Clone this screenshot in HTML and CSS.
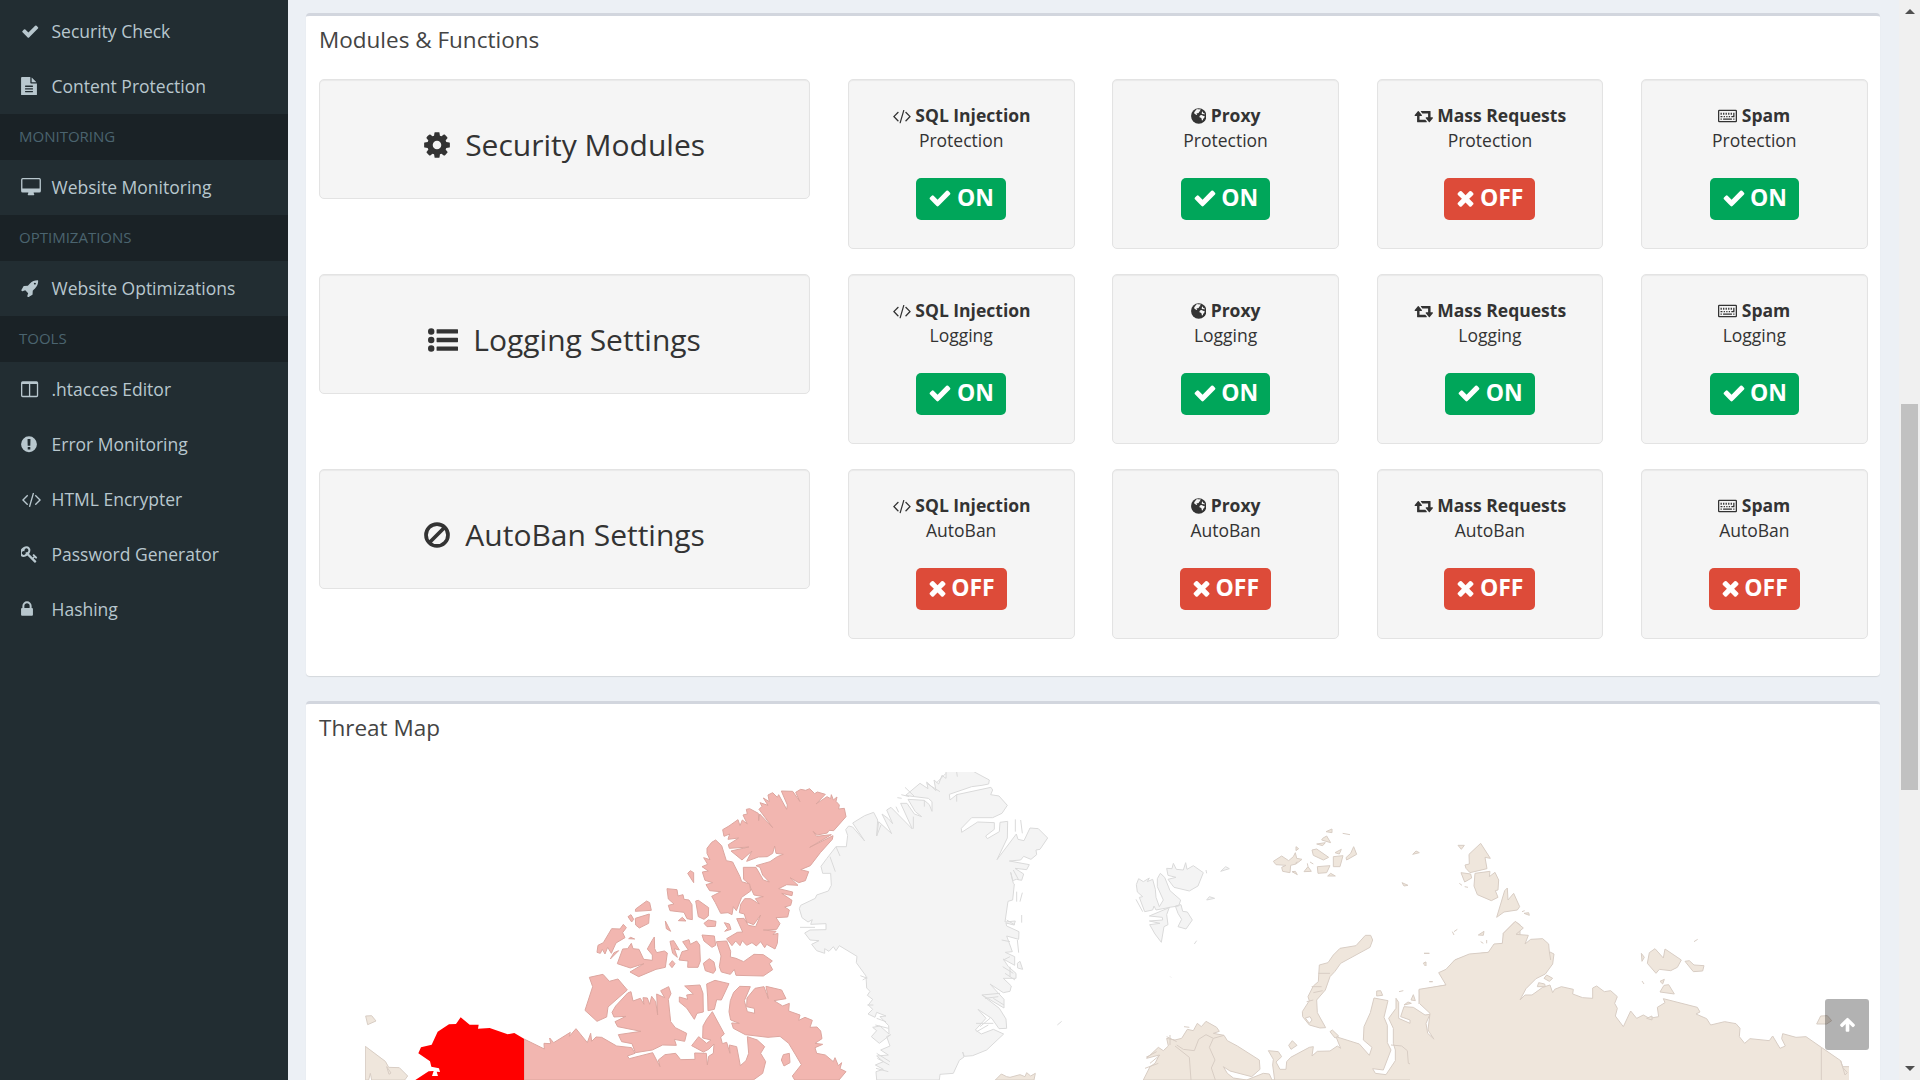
FILE: index.html
```
<!DOCTYPE html>
<html lang="en">
<head>
<meta charset="utf-8">
<title>Dashboard</title>
<link rel="stylesheet" href="styles.css">
</head>
<body>
<svg class="defs" width="0" height="0" aria-hidden="true">
<defs>
<symbol id="check" viewBox="0 0 1792 1792"><path d="M1671 566q0 40-28 68l-724 724-136 136q-28 28-68 28t-68-28l-136-136-362-362q-28-28-28-68t28-68l136-136q28-28 68-28t68 28l294 295 656-657q28-28 68-28t68 28l136 136q28 28 28 68z"/></symbol>
<symbol id="times" viewBox="190 0 1408 1792"><path d="M1490 1322q0 40-28 68l-136 136q-28 28-68 28t-68-28l-294-294-294 294q-28 28-68 28t-68-28l-136-136q-28-28-28-68t28-68l294-294-294-294q-28-28-28-68t28-68l136-136q28-28 68-28t68 28l294 294 294-294q28-28 68-28t68 28l136 136q28 28 28 68t-28 68l-294 294 294 294q28 28 28 68z"/></symbol>
<symbol id="cog" viewBox="128 0 1536 1792"><path d="M1152 896q0-106-75-181t-181-75-181 75-75 181 75 181 181 75 181-75 75-181zm512-109v222q0 12-8 23t-20 13l-185 28q-19 54-39 91 35 50 107 138 10 12 10 25t-9 23q-27 37-99 108t-94 71q-12 0-26-9l-138-108q-44 23-91 38-16 136-29 186-7 28-36 28h-222q-14 0-24.500-8.500t-11.500-21.500l-28-184q-49-16-90-37l-141 107q-10 9-25 9-14 0-25-11-126-114-165-168-7-10-7-23 0-12 8-23 15-21 51-66.500t54-70.500q-27-50-41-99l-183-27q-13-2-21-12.500t-8-23.500v-222q0-12 8-23t19-13l186-28q14-46 39-92-40-57-107-138-10-12-10-24 0-10 9-23 26-36 98.500-107.500t94.500-71.500q13 0 26 10l138 107q44-23 91-38 16-136 29-186 7-28 36-28h222q14 0 24.500 8.500t11.500 21.500l28 184q49 16 90 37l142-107q9-9 24-9 13 0 25 10 129 119 165 170 7 8 7 22 0 12-8 23-15 21-51 66.500t-54 70.500q26 50 41 98l183 28q13 2 21 12.500t8 23.500z"/></symbol>
<symbol id="list" viewBox="0 0 1792 1792"><path d="M384 1408a192 192 0 1 1-384 0a192 192 0 0 1 384 0zM384 896a192 192 0 1 1-384 0a192 192 0 0 1 384 0zM384 384a192 192 0 1 1-384 0a192 192 0 0 1 384 0zM544 1280h1216q32 0 32 32v192q0 32-32 32h-1216q-32 0-32-32v-192q0-32 32-32zM544 768h1216q32 0 32 32v192q0 32-32 32h-1216q-32 0-32-32v-192q0-32 32-32zM544 256h1216q32 0 32 32v192q0 32-32 32h-1216q-32 0-32-32v-192q0-32 32-32z"/></symbol>
<symbol id="ban" viewBox="128 0 1536 1792"><g fill="none" stroke="currentColor" stroke-width="222"><circle cx="896" cy="896" r="656"/><path d="M432 1360L1360 432"/></g></symbol>
<symbol id="code" viewBox="0 0 1952 1792"><path d="M681 1399l-50 50q-10 10-23 10t-23-10l-466-466q-10-10-10-23t10-23l466-466q10-10 23-10t23 10l50 50q10 10 10 23t-10 23l-393 393 393 393q10 10 10 23t-10 23zm591-1067l-373 1291q-4 13-15.500 19.500t-23.500 2.500l-62-17q-13-4-19.500-15.500t-2.500-24.500l373-1291q4-13 15.500-19.500t23.500-2.500l62 17q13 4 19.500 15.500t2.500 24.500zm657 651l-466 466q-10 10-23 10t-23-10l-50-50q-10-10-10-23t10-23l393-393-393-393q-10-10-10-23t10-23l50-50q10-10 23-10t23 10l466 466q10 10 10 23t-10 23z"/></symbol>
<symbol id="rocket" viewBox="0 0 1792 1792"><path d="M1440 448q0-40-28-68t-68-28-68 28-28 68 28 68 68 28 68-28 28-68zm224-288q0 249-75.500 430.500t-253.500 360.500q-81 80-195 176l-20 379q-2 16-16 26l-384 224q-7 4-16 4-12 0-23-9l-64-64q-13-14-8-32l85-276-281-281-276 85q-3 1-9 1-14 0-23-9l-64-64q-17-19-5-39l224-384q10-14 26-16l379-20q96-114 176-195 188-187 358-258t431-71q14 0 24 9.500t10 22.500z"/></symbol>
<symbol id="file" viewBox="128 0 1536 1792"><path fill-rule="evenodd" d="M1596 476q14 14 28 36h-472v-472q22 14 36 28zM1024 544q0 40 28 68t68 28h544v1056q0 40-28 68t-68 28h-1344q-40 0-68-28t-28-68v-1600q0-40 28-68t68-28h800v544zM1280 1440v-64q0-32-32-32h-704q-32 0-32 32v64q0 32 32 32h704q32 0 32-32zM1280 1184v-64q0-32-32-32h-704q-32 0-32 32v64q0 32 32 32h704q32 0 32-32zM1280 928v-64q0-32-32-32h-704q-32 0-32 32v64q0 32 32 32h704q32 0 32-32z"/></symbol>
<symbol id="desktop" viewBox="0 0 1920 1792"><path fill-rule="evenodd" d="M1792 992v-832q0-32-32-32h-1600q-32 0-32 32v832q0 32 32 32h1600q32 0 32-32zM1920 160v1088q0 160-160 160h-544q0 100 64 192q0 64-64 64h-512q-64 0-64-64q64-92 64-192h-544q-160 0-160-160v-1088q0-160 160-160h1600q160 0 160 160z"/></symbol>
<symbol id="columns" viewBox="0 0 1792 1792"><path fill-rule="evenodd" d="M160 1536h608v-1152h-640v1120q0 32 32 32zM1536 1504v-1120h-640v1152h608q32 0 32-32zM1664 288v1216q0 160-160 160h-1344q-160 0-160-160v-1216q0-160 160-160h1344q160 0 160 160z"/></symbol>
<symbol id="exclaim" viewBox="128 0 1536 1792"><path fill-rule="evenodd" d="M896 128a768 768 0 1 1 0 1536a768 768 0 0 1 0-1536zM1024 1375v-190q0-32-30-32h-192q-32 0-32 32v190q0 33 32 33h192q30 0 30-33zM1022 1031l18-621q0-26-32-26h-220q-36 0-36 26l17 621q0 22 33 22h185q33 0 35-22z"/></symbol>
<symbol id="key" viewBox="128 0 1664 1792"><path d="M832 512q0-80-56-136t-136-56-136 56-56 136q0 42 19 83-41-19-83-19-80 0-136 56t-56 136 56 136 136 56 136-56 56-136q0-42-19-83 41 19 83 19 80 0 136-56t56-136zm851 704q0 17-49 66t-66 49q-9 0-28.500-16t-36.500-33-38.500-40-24.500-26l-96 96 220 220q28 28 28 68 0 42-39 81t-81 39q-40 0-68-28l-671-671q-176 131-365 131-163 0-265.500-102.500t-102.500-265.500q0-160 95-313t248-248 313-95q163 0 265.500 102.500t102.500 265.500q0 189-131 365l355 355 96-96q-3-3-26-24.500t-40-38.500-33-36.500-16-28.500q0-17 49-66t66-49q13 0 23 10 6 6 46 44.500t82 79.500 86.500 86 73 78 28.500 41z"/></symbol>
<symbol id="lock" viewBox="0 0 1152 1792"><path fill-rule="evenodd" d="M320 768h512v-192q0-106-75-181t-181-75-181 75-75 181v192zM1152 864v576q0 96-96 96h-960q-96 0-96-96v-576q0-96 96-96h32v-192q0-184 132-316t316-132 316 132 132 316v192h32q96 0 96 96z"/></symbol>
<symbol id="retweet" viewBox="0 0 1984 1792"><path d="M1344 1504q0 13-9.500 22.500t-22.500 9.500h-960q-8 0-13.500-2t-9-7-5.500-8-3-11.500-1-11.500v-600h-192q-26 0-45-19t-19-45q0-24 15-41l320-384q19-22 49-22t49 22l320 384q15 17 15 41 0 26-19 45t-45 19h-192v384h576q16 0 25 11l160 192q7 10 7 21zm640-416q0 24-15 41l-320 384q-20 23-49 23t-49-23l-320-384q-15-17-15-41 0-26 19-45t45-19h192v-384h-576q-16 0-25-12l-160-192q-7-9-7-20 0-13 9.500-22.500t22.500-9.500h960q8 0 13.500 2t9 7 5.500 8 3 11.500 1 11.500v600h192q26 0 45 19t19 45z"/></symbol>
<symbol id="globe" viewBox="128 0 1536 1792"><circle cx="896" cy="896" r="768"/><path fill="#f5f5f5" d="M640 250l190-40 60 50 130-40 90 60-90 60 40 80-110 20-30 110-90 60-110 10-60 80 80 30-20 70-110-20-90-110-90-20 30-150 90-110zM1240 440l110 60-40 90 130 10 60 120-90 20-70-70-100 40-60-90zM1000 860l120-60 140 20 60 80 110-20 60 60-60 160-90 70-40 150-90 20-30-170-60-90-120-30-40-90z"/></symbol>
<symbol id="keyboard" viewBox="0 0 1920 1792"><path fill-rule="evenodd" d="M128 256h1664q128 0 128 128v1024q0 128-128 128h-1664q-128 0-128-128v-1024q0-128 128-128zM128 384v1024h1664v-1024z"/><path d="M256 1152h128v128h-128zM512 1152h896v128h-896zM1536 1152h128v128h-128zM256 896h192v128h-192zM576 896h128v128h-128zM832 896h128v128h-128zM1088 896h128v128h-128zM1344 896h320v128h-320zM256 576h128v192h-128zM512 576h128v192h-128zM768 576h128v192h-128zM1024 576h128v192h-128zM1280 576h128v192h-128zM1536 576h128v448h-128z"/></symbol>
<symbol id="up" viewBox="0 0 1792 1792"><path d="M1675 971q0 51-37 90l-75 75q-38 38-91 38-54 0-90-38l-294-293v704q0 52-37.500 84.500t-90.500 32.500h-128q-53 0-90.500-32.500t-37.500-84.500v-704l-294 293q-36 38-90 38t-90-38l-75-75q-38-38-38-90 0-53 38-91l651-651q35-37 90-37 54 0 91 37l651 651q37 39 37 91z"/></symbol>
</defs>
</svg>
<div class="page">
<aside class="sidebar">
<a class="item"><svg class="w18"><use href="#check"/></svg>Security Check</a>
<a class="item"><svg class="w15"><use href="#file"/></svg>Content Protection</a>
<div class="header">MONITORING</div>
<a class="item"><svg class="w20"><use href="#desktop"/></svg>Website Monitoring</a>
<div class="header">OPTIMIZATIONS</div>
<a class="item"><svg class="w18"><use href="#rocket"/></svg>Website Optimizations</a>
<div class="header">TOOLS</div>
<a class="item"><svg class="w18"><use href="#columns"/></svg>.htacces Editor</a>
<a class="item"><svg class="w15"><use href="#exclaim"/></svg>Error Monitoring</a>
<a class="item"><svg class="w20"><use href="#code"/></svg>HTML Encrypter</a>
<a class="item"><svg class="w17"><use href="#key"/></svg>Password Generator</a>
<a class="item"><svg class="w12"><use href="#lock"/></svg>Hashing</a>
</aside>
<main class="content">
<section class="box modules">
<h3 class="title">Modules &amp; Functions</h3>
<div class="grid">
<div class="well wide"><svg class="b26"><use href="#cog"/></svg>Security Modules</div>
<div class="well"><div class="name"><svg class="n19"><use href="#code"/></svg><b>SQL Injection</b></div><div class="kind">Protection</div><span class="label on"><svg><use href="#check"/></svg>ON</span></div>
<div class="well"><div class="name"><svg class="n15"><use href="#globe"/></svg><b>Proxy</b></div><div class="kind">Protection</div><span class="label on"><svg><use href="#check"/></svg>ON</span></div>
<div class="well"><div class="name"><svg class="n19"><use href="#retweet"/></svg><b>Mass Requests</b></div><div class="kind">Protection</div><span class="label off"><svg><use href="#times"/></svg>OFF</span></div>
<div class="well"><div class="name"><svg class="n19"><use href="#keyboard"/></svg><b>Spam</b></div><div class="kind">Protection</div><span class="label on"><svg><use href="#check"/></svg>ON</span></div>
<div class="well wide"><svg class="b30"><use href="#list"/></svg>Logging Settings</div>
<div class="well"><div class="name"><svg class="n19"><use href="#code"/></svg><b>SQL Injection</b></div><div class="kind">Logging</div><span class="label on"><svg><use href="#check"/></svg>ON</span></div>
<div class="well"><div class="name"><svg class="n15"><use href="#globe"/></svg><b>Proxy</b></div><div class="kind">Logging</div><span class="label on"><svg><use href="#check"/></svg>ON</span></div>
<div class="well"><div class="name"><svg class="n19"><use href="#retweet"/></svg><b>Mass Requests</b></div><div class="kind">Logging</div><span class="label on"><svg><use href="#check"/></svg>ON</span></div>
<div class="well"><div class="name"><svg class="n19"><use href="#keyboard"/></svg><b>Spam</b></div><div class="kind">Logging</div><span class="label on"><svg><use href="#check"/></svg>ON</span></div>
<div class="well wide"><svg class="b26"><use href="#ban"/></svg>AutoBan Settings</div>
<div class="well"><div class="name"><svg class="n19"><use href="#code"/></svg><b>SQL Injection</b></div><div class="kind">AutoBan</div><span class="label off"><svg><use href="#times"/></svg>OFF</span></div>
<div class="well"><div class="name"><svg class="n15"><use href="#globe"/></svg><b>Proxy</b></div><div class="kind">AutoBan</div><span class="label off"><svg><use href="#times"/></svg>OFF</span></div>
<div class="well"><div class="name"><svg class="n19"><use href="#retweet"/></svg><b>Mass Requests</b></div><div class="kind">AutoBan</div><span class="label off"><svg><use href="#times"/></svg>OFF</span></div>
<div class="well"><div class="name"><svg class="n19"><use href="#keyboard"/></svg><b>Spam</b></div><div class="kind">AutoBan</div><span class="label off"><svg><use href="#times"/></svg>OFF</span></div>
</div>
</section>
<section class="box threat">
<h3 class="title">Threat Map</h3>
<svg class="map" viewBox="365 772 1484 308">
<!-- Canada and Alaska -->
<g transform="translate(340 760) scale(.33333)">
<g class="ca">
<path d="M1324 93L1358 94 1380 125 1367 97 1382 88 1397 91 1409 86 1424 101 1432 96 1456 103 1428 132 1461 110 1472 116 1474 104 1480 120 1491 111 1488 124 1498 135 1496 147 1513 145 1518 170 1481 212 1467 211 1462 219 1432 225 1419 214 1430 229 1474 224 1409 262 1479 227 1477 238 1441 278 1411 317 1382 329 1406 335 1396 362 1376 368 1350 353 1374 376 1340 374 1316 386 1358 396 1356 407 1325 400 1356 421 1352 436 1334 441 1348 450 1343 471 1308 473 1320 491 1310 508 1270 510 1308 514 1299 524 1314 520 1312 550 1305 567 1280 553 1274 563 1262 545 1249 558 1236 548 1220 556 1207 542 1200 557 1187 543 1176 557 1160 536 1192 517 1208 516 1190 476 1212 475 1225 496 1247 500 1262 465 1241 494 1220 486 1213 462 1198 458 1202 433 1214 416 1232 416 1258 432 1246 416 1270 410 1242 405 1226 370 1211 358 1210 322 1248 322 1270 360 1288 366 1268 345 1260 322 1248 317 1290 305 1312 290 1330 283 1308 280 1304 258 1298 280 1282 290 1255 291 1220 304 1236 273 1206 300 1173 273 1227 261 1168 265 1165 254 1196 234 1164 238 1169 222 1152 229 1148 209 1167 198 1194 179 1200 197 1207 180 1222 192 1209 165 1222 162 1219 148 1229 146 1255 160 1256 182 1259 162 1298 203 1257 148 1266 139 1260 128 1284 136 1270 114 1288 125 1284 105 1298 98 1312 112 1316 104 1340 148 1342 135z"/>
<path d="M1115 247L1127 240 1145 257 1159 302 1178 306 1200 350 1205 365 1229 372 1232 393 1205 412 1189 452 1180 440 1176 464 1164 458 1142 460 1126 428 1115 409 1142 395 1109 392 1098 374 1118 368 1095 361 1087 336 1105 333 1086 320 1103 313 1091 293 1110 299 1101 280 1101 265z"/>
<path d="M981 386L1011 389 1014 408 1029 404 1032 418 1047 420 1056 434 1057 479 1041 476 1032 457 990 452 985 436 1002 432 985 417zM1067 423L1075 421 1106 443 1105 468 1092 478 1075 470zM1043 340L1051 332 1061 338 1061 368zM887 447L920 423 929 428 934 451 886 454zM864 470L873 464 881 478 875 486zM886 475L928 462 926 490 898 504 887 495zM976 483L992 514 979 506zM1092 490L1105 480 1128 484 1126 499 1101 500zM1015 482L1027 472 1038 483zM1153 488L1168 492 1173 508 1154 514 1163 505zM866 536L872 532 884 537z"/>
<path d="M771 577L774 556 790 548 815 506 840 507 850 493 859 503 848 518 855 533 828 549 814 580 803 562 795 582 787 568 781 580zM836 572L811 597 822 578zM848 567L863 566 874 550 879 566 897 568 911 598 937 601 937 585 922 567 936 542 943 531 944 566 950 578 973 573 982 579 976 622 948 628 896 650 870 636 912 611 871 624 832 611zM990 544L1001 542 1018 570 1003 566 1012 592 998 580zM988 613L997 602 1005 611 996 623zM1028 545L1047 539 1051 553 1070 543 1079 555 1081 603 1074 622 1043 622 1044 603 1017 600 1026 575 1045 570zM1086 525L1123 528 1127 556 1116 562 1092 543zM1090 610L1108 596 1122 606 1127 630 1120 640 1096 632z"/>
<path d="M1129 545L1160 543 1172 574 1171 591 1188 595 1211 605 1242 583 1270 584 1297 603 1288 611 1298 629 1270 648 1188 646 1183 628 1171 643 1144 636 1138 620 1143 588z"/>
<path d="M748 652L789 643 808 664 834 657 862 690 804 741 800 771 771 784 735 751 758 680z"/>
<path d="M863 699L873 695 879 723 901 715 912 733 909 713 922 714 929 733 935 709 947 725 953 765 950 702 974 713 962 692 986 680 993 701 985 718 992 785 1006 803 1040 820 1034 844 1003 838 1009 856 968 855 937 870 886 878 876 851 845 845 835 824 903 814 833 800 825 785 858 769 822 771 816 757 827 738zM1034 678L1080 675 1089 700 1090 756 1071 760 1063 778 1040 744 1018 726 1018 711 1043 718 1040 705 1060 702zM1100 672L1125 661 1167 671 1144 720 1130 719 1123 748 1104 752 1103 711z"/>
<path d="M1181 697L1199 679 1231 680 1213 722 1222 755 1244 760 1243 745 1220 740 1221 714 1245 685 1272 680 1285 716 1278 679 1325 690 1338 716 1302 722 1328 738 1348 730 1346 753 1380 765 1376 781 1395 772 1417 781 1410 802 1431 801 1442 813 1446 836 1425 850 1448 853 1425 863 1430 880 1456 885 1480 905 1485 893 1495 917 1505 908 1500 926 1518 935 1497 960 1364 960 1357 948 1384 914 1367 885 1346 850 1320 829 1284 832 1216 824 1180 805 1175 789 1198 790 1172 780 1167 755 1171 722z"/>
<path d="M552 837L613 867 612 850 632 851 629 834 641 848 691 817 688 829 708 806 742 848 752 820 755 844 768 831 785 832 830 858 875 863 885 880 862 888 868 896 938 878 960 920 955 900 975 884 1007 880 1022 899 1065 898 1064 879 1099 880 1102 915 1106 889 1120 880 1122 852 1106 868 1090 876 1055 857 1076 830 1100 850 1113 840 1088 834 1089 798 1100 778 1117 755 1153 822 1142 831 1147 851 1160 847 1170 880 1168 855 1190 860 1201 917 1218 902 1226 880 1222 830 1252 840 1274 860 1262 880 1277 905 1268 940 1240 960 552 960zM1324 900L1330 884 1348 880 1350 908 1332 918z"/>
</g>
<path class="us" d="M226 960L266 934 281 933 276 948 294 948 290 935 300 936 297 925 274 920 270 904 235 880 243 862 275 854 293 815 327 793 348 792 362 772 389 794 416 794 414 806 449 804 503 823 523 819 552 836V960z"/>
<path class="ru" d="M77 768L95 767 108 783 83 794zM76 859L136 904 146 922 178 923 203 948 194 960H95L91 940 86 960H76zM140 920L153 939 147 943z"/>
</g>
<!-- Greenland -->
<g class="gl" transform="translate(780 760) scale(.33333)">
<path d="M498 30L572 30 628 60 626 72 606 76 575 80 508 103 510 120 530 104 633 82 638 90 632 104 657 108 682 136 666 160 638 173 575 173 544 205 545 217 593 186 643 188 643 208 617 228 622 236 658 215 660 187 683 184 682 234 651 299 709 222 714 238 732 242 750 204 775 206 803 234 780 268 768 270 770 284 753 298 731 289 722 300 688 303 748 314 740 329 705 325 731 342 725 361 709 358 698 362 692 337 700 370 703 372 698 420 684 424 675 486 706 483 702 495 678 489 680 498 717 515 716 538 680 528 697 575 676 577 704 590 704 616 670 597 685 620 708 640 708 655 670 655 694 678 690 694 670 698 630 672 672 718 672 744 606 705 658 745 678 777 680 805 657 806 636 776 594 748 618 775 586 810 604 822 640 808 671 822 620 870 578 887 553 889 548 876 552 891 538 901 520 940 480 943 478 960H290L288 935 310 928 286 915 310 905 290 888 325 885 302 870 330 858 320 830 332 824 298 850 274 830 290 812 278 802 300 798 327 822 326 797 300 770 318 768 290 757 285 772 264 762 278 748 265 735 278 718 262 706 270 694 260 684 258 648 229 608 231 589 178 557 168 572 160 560 147 574 134 566 134 580 110 572 95 553 117 542 90 540 74 519 90 510 138 509 138 491 92 493 97 479 84 486 66 473 58 446 62 436 106 415 110 405 145 393 154 376 152 340 128 340 123 319 140 296 168 260 199 260 203 226 197 209 206 198 218 201 254 243 218 189 254 167 281 157 293 180 290 228 296 185 335 221 306 162 325 176 338 191 320 150 333 142 397 207 362 130 381 130 403 162 425 170 406 155 384 118 433 121 448 134 456 154 456 125 445 115 396 109 377 106 420 70 444 86 440 66 468 92 462 60 476 72 486 46 498 55z"/>
<path d="M400 206V170M433 121V140M290 228L303 195M530 104V125M530 36L532 50M498 40L470 68M440 70L480 95M375 82L402 108M364 104L388 110M352 113L365 115M348 140L356 157M706 178V215M722 180L727 220M60 502H105M168 260L180 288M150 290L166 335M710 395V425M727 398L720 425M725 465V488M712 540L716 578M712 610L720 604 728 628 713 624zM832 795L845 784M241 647L262 655M248 660L262 652M262 735H280M290 775L318 785M286 795L325 805M290 880L330 905M292 895L328 915M288 925L325 935M670 600L690 590M668 620L700 640M675 640L705 660M690 620L690 650M605 705L660 700M615 715L655 710M640 715L672 735M588 790L640 790M600 800L630 775M590 815L625 795M665 540L690 545M680 480L705 495M700 330L716 360"/>
</g>
<!-- Svalbard -->
<g class="gl" transform="translate(1100 800) scale(.33333)">
<path d="M109 254L116 236 130 245 148 234 142 245 158 238 166 268 168 292 178 320 190 300 172 260 172 236 181 220 194 232 210 272 242 300 236 318 208 322 200 344 204 374 192 380 184 427 165 402 149 374 180 370 148 363 188 360 187 352 148 348 210 322 168 330 162 318 158 330 134 335 118 292 128 290 112 276zM200 205L216 206 220 190 229 208 250 210 257 188 261 208 280 197 310 218 294 258 268 273 222 262 204 238 228 232 204 226zM226 318L243 314 248 334 262 336 277 360 258 387 234 380 245 358 234 340zM362 214L377 200 388 206zM320 300L328 290 344 295zM108 298L128 335M283 432L290 422M211 530L213 532M318 210L320 220"/>
</g>
<!-- Northern Europe and Russia -->
<g class="ru" transform="translate(1100 800) scale(.33333)">
<path d="M130 840L150 800 165 790 178 765 140 775 175 742 190 752 205 738 200 715 225 720 245 715 262 688 280 692 292 670 304 680 318 664 350 682 358 694 340 700 372 706 382 722 412 738 478 780 480 808 455 830 390 813 370 800 382 820 400 834 440 840zM440 840L490 820 508 822 516 840 524 840 518 795 520 778 505 752 535 755 545 770 528 786 540 808 558 808 560 785 572 772 628 742 640 740 636 768 652 754 690 753 712 738 722 745 708 710 778 732 808 766 816 742 790 720 792 680 811 638 822 594 864 602 852 652 862 676V728L873 750 850 810 818 806 826 820 858 824 886 782V750L880 730 880 685 866 655 888 625 888 595 896 607 896 655 930 670 930 660 902 650 912 620 940 622 975 645 990 643 978 670 983 700 1003 718 990 690 993 640 975 618 960 612 958 570 1038 555 1040 545 1018 520 1045 508 1065 480 1108 465 1165 457 1210 427V400L1245 365 1260 374V840z"/>
<path class="nofill" d="M225 738L268 772 273 840M230 735L250 748 283 752 296 718 318 704 340 715 328 742 345 780 334 804 346 840M372 706L340 715M873 735L905 738 922 752 925 790 950 798"/>
<path d="M607 635L628 602 624 590 640 558 655 545 658 495 684 488 700 465 720 445 768 437 796 406 812 406 818 420 810 442 722 490 705 514 690 530 676 570 650 600 652 638 677 683 660 684 628 675 608 650z"/>
<path fill="#fff" d="M616 654L630 650 636 660 628 670z"/>
<path d="M566 736L577 722 591 736 573 748zM690 695L697 690 716 708 705 714zM830 573L842 572 848 586 830 588zM520 184L545 168 566 182 580 170 586 158 590 175 606 178 588 192 572 196 570 218 548 214 545 202 558 196 528 194zM636 150L650 147 686 172 670 180 640 166zM700 170L729 167 720 200 700 200zM738 173L752 160 761 140 770 163 740 180zM652 200L690 197 680 218 654 220zM678 95L696 87 696 98zM668 115L680 108 692 128 665 120zM650 132L676 128 668 137zM705 158L724 148 718 162zM612 215L624 200 634 214zM576 215L592 224 586 214zM683 228L692 220 706 228zM588 140L596 146 588 152zM728 100L750 104M938 163L948 153 958 158zM906 248L924 256 912 258zM970 490L976 486 976 498zM972 460L988 460M988 545H998M933 600L940 584 946 602zM912 615L924 606 934 610zM1057 395L1062 405M1062 395L1072 388M897 575L910 572M252 680L268 682M138 772L170 755M150 790L180 765M135 805L175 790M200 710L230 725M210 705L210 735M620 605L640 600M635 560L665 560M655 520L690 520M640 578L668 572M586 190L592 185M622 190L624 200M630 186L640 192"/>
</g>
<g class="ru" transform="translate(1420 800) scale(.33333)">
<path class="land" d="M-3 568L78 555 56 518 78 508 104 480 148 462 205 457 222 432 247 430 250 400 286 364 310 384 288 403 325 406 315 432 332 418 368 416 386 432 388 455 402 462 398 492 376 522 348 536 318 566 300 600 315 585 336 585 368 562 390 555 398 578 404 568 424 560 460 568 458 582 488 593 518 595 518 564 530 558 553 575 572 572 592 590 584 610 592 625 586 648 610 680 632 633 650 655 670 645 688 655 716 650 712 622 735 608 730 596 832 622 840 636 828 642 860 656 872 675 914 665 948 671 960 685 958 710 974 730 990 716 1048 722 1058 708 1080 745 1096 738 1085 716 1088 701 1128 712 1158 710 1204 742 1262 782 1268 800 1287 800V845H-30V730L42 718 24 690 30 640 0 612z"/>
<path class="nofill coast" d="M-3 612V568L78 555 56 518 78 508 104 480 148 462 205 457 222 432 247 430 250 400 286 364 310 384 288 403 325 406 315 432 332 418 368 416 386 432 388 455 402 462 398 492 376 522 348 536 318 566 300 600 315 585 336 585 368 562 390 555 398 578 404 568 424 560 460 568 458 582 488 593 518 595 518 564 530 558 553 575 572 572 592 590 584 610 592 625 586 648 610 680 632 633 650 655 670 645 688 655 716 650 712 622 735 608 730 596 832 622 840 636 828 642 860 656 872 675 914 665 948 671 960 685 958 710 974 730 990 716 1048 722 1058 708 1080 745 1096 738 1085 716 1088 701 1128 712 1158 710 1204 742 1262 782 1268 800 1287 800"/>
<path class="nofill" d="M1204 742V840M1262 782L1275 825 1282 818 1268 802M388 455L392 480M42 718L24 690 30 640 0 612"/>
<path d="M182 130L211 175 195 172 201 206 150 218 138 205 135 195 148 192 147 163zM114 136H133L124 148zM123 218L152 222 155 234 134 246zM165 220L210 214 208 230 225 217 236 240 234 270 226 272 234 292 214 302 172 284 162 258zM254 272L262 264 264 300 281 280 299 320 292 330 252 336 230 352zM312 340L326 338 328 346zM175 405L192 394 190 406zM682 490L688 458 705 446 730 474 735 447 784 480 772 502 752 512 718 508 708 520zM795 484L808 482 822 495 852 497 848 513 820 515zM664 460L673 472 666 484zM720 576L732 556 746 554 763 582zM720 544L733 538 728 552zM822 425L833 418M666 543L672 552M1190 672L1202 648 1222 647 1235 662 1220 672zM680 655L696 648 696 660zM372 535L380 525 398 535 388 544zM352 560L356 548 374 552 376 560zM118 250L126 256M134 260L144 262M12 460H28M10 490L18 486V498M28 545H38M182 425L190 430M200 420V430M306 335L314 332"/>
</g>
<g class="ru" transform="translate(780 760) scale(.33333)"><path d="M646 960L664 942 680 950 690 952 720 944 735 950 740 938 752 948 766 940 762 960z"/></g>
</svg>
<a class="totop"><svg><use href="#up"/></svg></a>
</section>
</main>
<div class="scrollbar"><i class="arrow-up"></i><i class="thumb"></i><i class="arrow-down"></i></div>
</div>
</body>
</html>
```
FILE: styles.css
```
* { box-sizing: border-box; }
body { margin: 0; font: 400 17.5px/25px "Open Sans", sans-serif; color: #333; }
svg { fill: currentColor; flex: none; }
.defs { display: block; }
.page { display: flex; width: 1920px; height: 1080px; overflow: hidden; background: #ecf0f5; }
.sidebar { width: 288px; padding-top: 4px; background: #222d32; color: #b8c7ce; flex: none; }
.item { display: grid; grid-template-columns: 30.5px 1fr; align-items: center; height: 55px; padding: 0 0 1px 21px; white-space: nowrap; }
.item svg { height: 18.5px; }
.header { height: 46px; padding: 0 19px; font-size: 15px; line-height: 45px; color: #4b646f; background: #1a2226; }
.w12 { width: 12px; } .w15 { width: 16px; } .w17 { width: 17.5px; } .w18 { width: 18.5px; } .w20 { width: 20px; }
.content { flex: 1; display: flex; flex-direction: column; gap: 25px; padding: 13px 19px 0 18px; min-width: 0; }
.box { position: relative; flex: none; border-top: 3px solid #d2d6de; border-radius: 4px; background: #fff; box-shadow: 0 1px 1px rgba(0,0,0,.1); }
.modules { height: 663px; padding: 10px 12.250px 0 13px; }
.threat { height: 400px; padding: 10px 0 0 13px; }
.title { margin: 0; font-size: 22.5px; font-weight: 400; line-height: 27px; color: #444; }
.grid { display: grid; grid-template-columns: 491.250px repeat(4, 1fr); column-gap: 37.5px; row-gap: 25px; margin-top: 26px; }
.well { display: flex; flex-direction: column; align-items: center; height: 170px; padding-top: 23px; background: #f5f5f5; border: 1px solid #e3e3e3; border-radius: 5px; box-shadow: inset 0 1px 1px rgba(0,0,0,.05); }
.wide { flex-direction: row; justify-content: center; gap: 15px; height: 120px; padding-top: 11px; font-size: 30px; }
.wide svg { height: 30px; }
.b26 { width: 26px; } .b30 { width: 30px; }
.name { display: flex; align-items: center; gap: 4.5px; height: 25px; }
.name b { font-weight: 700; }
.name svg { height: 18px; }
.n15 { width: 15.5px; } .n19 { width: 19px; }
.label { display: flex; align-items: center; gap: 4.5px; height: 42px; margin-top: 25px; padding: 0 12px 4px; border-radius: 5px; color: #fff; font-size: 23px; font-weight: 700; }
.label svg { width: 24px; height: 24px; margin-top: 2px; }
.on { background: #00a65a; }
.off { background: #dd4b39; }
.off svg { width: 19px; }
.map { display: block; width: 1484px; height: 308px; margin: 31px 0 0 46px; }
.map path { stroke-width: 3; stroke-linejoin: round; }
.ca { fill: #f2b6b0; stroke: #dca69f; }
.us { fill: #f00; }
.gl { fill: #f4f4f4; stroke: #dadada; }
.ru { fill: #efe6dc; stroke: #d8cdc4; }
.map .nofill { fill: none; }
.map .land { stroke: none; }
.totop { position: absolute; right: 11px; top: 295px; display: flex; align-items: center; justify-content: center; width: 44px; height: 51px; border-radius: 3px; background: rgba(0,0,0,.3); color: #fff; }
.totop svg { width: 17px; height: 17px; }
.scrollbar { display: flex; flex-direction: column; align-items: center; width: 21px; background: #f0f0f0; }
.thumb { width: 17px; height: 386px; margin-top: 390px; background: #c1c1c1; }
.arrow-up, .arrow-down { border: 5px solid transparent; }
.arrow-up { margin-top: 4px; border-bottom-color: #505050; }
.arrow-down { margin-top: 276px; border-top-color: #505050; }
```
